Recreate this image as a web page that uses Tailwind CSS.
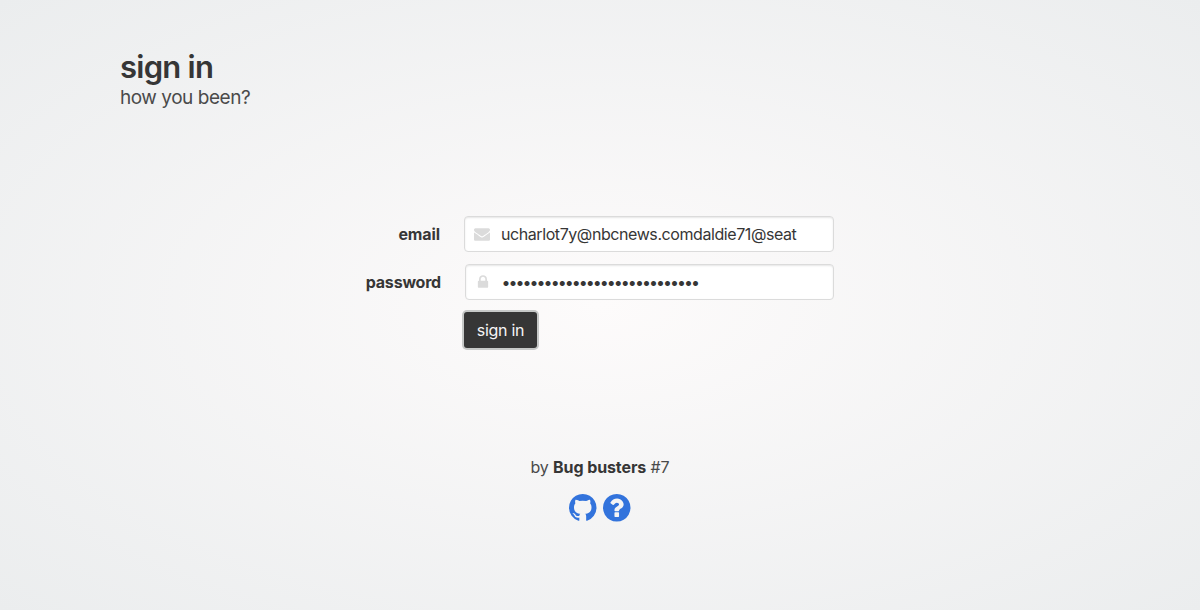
<!DOCTYPE html>
<html lang="en">
<head>
<meta charset="utf-8">
<title>sign in</title>
<script src="https://cdn.jsdelivr.net/npm/@tailwindcss/browser@4"></script>
</head>
<body class="h-[610px] overflow-hidden bg-[radial-gradient(#fdfbfb,#ebedee)] font-[Inter,sans-serif] text-base text-[#4a4a4a]">
<main class="flex h-full flex-col">
  <header class="px-[120px] pt-[49px]">
    <h1 class="h-9 whitespace-nowrap text-[31px] leading-9 font-semibold tracking-[-0.75px] text-[#363636]">sign in</h1>
    <p class="mt-[3px] h-6 text-[19px] leading-[20px] tracking-[-0.46px]">how you been?</p>
  </header>
  <form class="mt-[104px] flex flex-col gap-3 pl-[340px]">
    <div class="flex h-9 items-center">
      <label class="w-[100px] text-right font-bold tracking-[-0.1px] text-[#363636]">email</label>
      <div class="ml-6 flex h-9 w-[370px] items-center rounded border border-[#dbdbdb] bg-white pl-[9px] text-[#363636] shadow-[inset_0_1px_2px_rgba(10,10,10,0.1)]">
        <svg class="size-4 fill-[#dbdbdb]" viewBox="0 0 1792 1792"><path d="M1792 710v794q0 66-47 113t-113 47h-1472q-66 0-113-47t-47-113v-794q44 49 101 87 362 246 497 345 57 42 92.5 65.5t94.5 48 110 24.5h2q51 0 110-24.5t94.5-48 92.5-65.5q170-123 498-345 57-39 100-87zm0-294q0 79-49 151t-122 123q-376 261-468 325-10 7-42.5 31t-54 38.5-52 32.5-57.5 27-50 9h-2q-23 0-50-9t-57.5-27-52-32.5-54-38.5-42.5-31q-91-64-262-182.5t-205-142.5q-62-42-117-115.5t-55-136.5q0-78 41.5-130t118.5-52h1472q65 0 112.5 47t47.5 113z"/></svg>
        <span class="ml-[11px] whitespace-nowrap tracking-[-0.42px]">ucharlot7y@nbcnews.comdaldie71@seat</span>
      </div>
    </div>
    <div class="flex h-9 items-center">
      <label class="w-[101px] text-right font-bold tracking-[-0.2px] text-[#363636]">password</label>
      <div class="ml-6 flex h-9 w-[369px] items-center rounded border border-[#dbdbdb] bg-white pl-[9px] text-[#363636] shadow-[inset_0_1px_2px_rgba(10,10,10,0.1)]">
        <svg class="size-4 fill-[#dbdbdb]" viewBox="0 0 1792 1792"><path d="M640 768h512v-192q0-106-75-181t-181-75-181 75-75 181v192zm832 96v576q0 40-28 68t-68 28h-960q-40 0-68-28t-28-68v-576q0-40 28-68t68-28h32v-192q0-184 132-316t316-132 316 132 132 316v192h32q40 0 68 28t28 68z"/></svg>
        <span class="ml-[10.5px] whitespace-nowrap tracking-[-1.98px]">••••••••••••••••••••••••••••</span>
      </div>
    </div>
    <button type="button" class="ml-[124px] h-9 w-[73px] rounded-[3px] bg-[#363636] tracking-[-0.3px] text-[#f5f5f5] shadow-[0_0_0_2px_#c6c8c7]">sign in</button>
  </form>
  <footer class="mt-[107px] flex flex-col items-center">
    <p class="h-6 whitespace-nowrap leading-6 tracking-[-0.1px]">by <strong class="font-bold text-[#363636]">Bug busters</strong> #7</p>
    <div class="mt-[15px] flex gap-[6.5px] fill-[#3273dc]">
      <svg class="size-[27.5px]" viewBox="128 128 1536 1536"><path d="M896 128q209 0 385.5 103t279.5 279.5 103 385.5q0 251-146.5 451.5t-378.5 277.5q-27 5-40-7t-13-30q0-3 .5-76.5t.5-134.5q0-97-52-142 57-6 102.5-18t94-39 81-66.5 53-105 20.5-150.5q0-119-79-206 37-91-8-204-28-9-81 11t-92 44l-38 24q-93-26-192-26t-192 26q-16-11-42.5-27t-83.5-38.5-85-13.5q-45 113-8 204-79 87-79 206 0 85 20.5 150t52.5 105 80.5 67 94 39 102.5 18q-39 36-49 103-21 10-45 15t-57 5-65.5-21.5-55.5-62.5q-19-32-48.5-52t-49.5-24l-20-3q-21 0-29 4.5t-5 11.5 9 14 13 12l7 5q22 10 43.5 38t31.5 51l10 23q13 38 44 61.5t67 30 69.5 7 55.5-3.5l23-4q0 38 .5 88.5t.5 54.5q0 18-13 30t-40 7q-232-77-378.5-277.5t-146.5-451.5q0-209 103-385.5t279.5-279.5 385.5-103z"/></svg>
      <svg class="size-[27.5px]" viewBox="128 128 1536 1536"><path d="M1024 1376v-192q0-14-9-23t-23-9h-192q-14 0-23 9t-9 23v192q0 14 9 23t23 9h192q14 0 23-9t9-23zm256-672q0-88-55.5-163t-138.5-116-170-41q-243 0-371 213-15 24 8 42l132 100q7 6 19 6 16 0 25-12 53-68 86-92 34-24 86-24 48 0 85.5 26t37.5 59q0 38-20 61t-68 45q-63 28-115.5 86.5t-52.5 125.5v36q0 14 9 23t23 9h192q14 0 23-9t9-23q0-19 21.5-49.5t54.5-49.5q32-18 49-28.5t46-35 44.5-48 28-60.5 12.5-81zm384 192q0 209-103 385.5t-279.5 279.5-385.5 103-385.5-103-279.5-279.5-103-385.5 103-385.5 279.5-279.5 385.5-103 385.5 103 279.5 279.5 103 385.5z"/></svg>
    </div>
  </footer>
</main>
</body>
</html>
